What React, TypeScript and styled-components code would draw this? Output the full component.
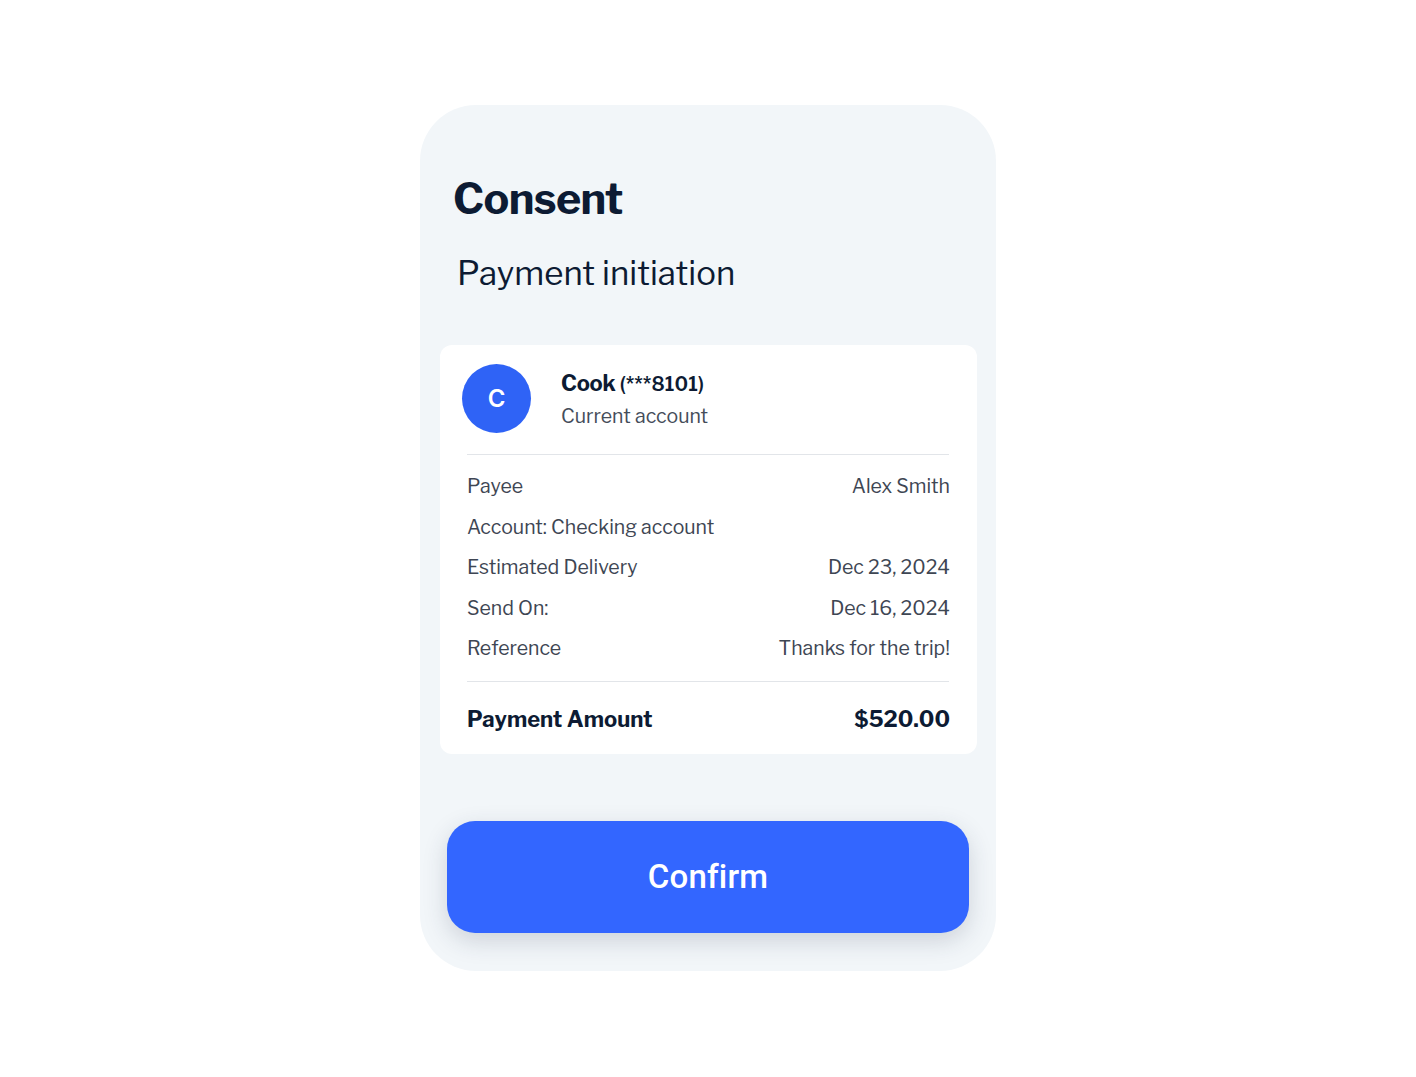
import React from "react";
import styled, { createGlobalStyle } from "styled-components";

const Global = createGlobalStyle`
  html, body { margin: 0; padding: 0; background: #ffffff; }
  body { font-family: "Libre Franklin", Inter, "Noto Sans", sans-serif; }
`;

const Page = styled.div`
  width: 1416px;
  height: 1077px;
  display: flex;
  justify-content: center;
  padding-top: 105px;
  box-sizing: border-box;
`;

const Shell = styled.div`
  width: 576px;
  height: 866px;
  background: #f2f6f9;
  border-radius: 56px;
  box-sizing: border-box;
  padding: 72px 19px 0 20px;
  display: flex;
  flex-direction: column;
`;

const Title = styled.h1`
  margin: 0 0 0 13px;
  font-size: 43px;
  line-height: 44px;
  font-weight: 700;
  color: #0d1b33;
  letter-spacing: -0.6px;
`;

const Subtitle = styled.h2`
  margin: 32px 0 0 17px;
  font-size: 33px;
  line-height: 40px;
  font-weight: 400;
  color: #0d1b33;
  letter-spacing: 0px;
`;

const Card = styled.div`
  margin-top: 52px;
  background: #ffffff;
  border-radius: 12px;
  padding: 19px 28px 22px 22px;
  display: flex;
  flex-direction: column;
`;

const AccountRow = styled.div`
  display: flex;
  align-items: center;
  gap: 30px;
  padding-bottom: 21px;
`;

const Divider = styled.div<{ $inset?: number }>`
  height: 1px;
  background: #e2e5e9;
  margin-left: ${(p) => p.$inset ?? 0}px;
`;

const Avatar = styled.div`
  width: 69px;
  height: 69px;
  border-radius: 50%;
  background: #2f63f6;
  color: #ffffff;
  display: flex;
  align-items: center;
  justify-content: center;
  font-size: 24px;
  font-weight: 600;
  font-family: Inter, sans-serif;
  flex-shrink: 0;
`;

const AccountText = styled.div`
  display: flex;
  flex-direction: column;
  gap: 6px;
`;

const AccountName = styled.div`
  font-size: 22px;
  font-weight: 700;
  color: #0d1b33;
  letter-spacing: -0.3px;
  line-height: 28px;
`;

const AccountMask = styled.span`
  font-size: 19.5px;
  font-weight: 600;
  letter-spacing: 0.1px;
`;

const AccountType = styled.div`
  font-size: 19.5px;
  color: #454d5a;
  line-height: 24px;
  letter-spacing: 0px;
`;

const Details = styled.div`
  display: flex;
  flex-direction: column;
  margin-left: 5px;
`;

const DetailList = styled.div`
  display: flex;
  flex-direction: column;
  padding: 11px 0 12px;
`;

const DetailRow = styled.div`
  display: flex;
  justify-content: space-between;
  align-items: center;
  height: 40.5px;
  font-size: 19.5px;
  color: #3e4653;
  letter-spacing: 0px;
  margin-right: -1px;
`;

const TotalRow = styled.div`
  display: flex;
  justify-content: space-between;
  align-items: center;
  padding-top: 24px;
  font-size: 22px;
  font-weight: 700;
  color: #0d1b33;
  letter-spacing: 0px;
  margin-right: -1px;
`;

const ButtonArea = styled.div`
  margin-top: 67px;
  padding: 0 8px 0 7px;
`;

const ConfirmButton = styled.button`
  width: 100%;
  height: 112px;
  border: none;
  border-radius: 28px;
  background: #3366ff;
  color: #ffffff;
  font-family: Roboto, Inter, sans-serif;
  font-size: 33px;
  font-weight: 500;
  letter-spacing: 0.2px;
  box-shadow: 0 8px 24px rgba(40, 50, 80, 0.18);
  cursor: pointer;
`;

const rows: [string, string][] = [
  ["Payee", "Alex Smith"],
  ["Account: Checking account", ""],
  ["Estimated Delivery", "Dec 23, 2024"],
  ["Send On:", "Dec 16, 2024"],
  ["Reference", "Thanks for the trip!"],
];

export default function App() {
  return (
    <>
      <Global />
      <Page>
        <Shell>
          <Title>Consent</Title>
          <Subtitle>Payment initiation</Subtitle>
          <Card>
            <AccountRow>
              <Avatar>C</Avatar>
              <AccountText>
                <AccountName>
                  Cook <AccountMask>(***8101)</AccountMask>
                </AccountName>
                <AccountType>Current account</AccountType>
              </AccountText>
            </AccountRow>
            <Divider $inset={5} />
            <Details>
              <DetailList>
                {rows.map(([k, v]) => (
                  <DetailRow key={k}>
                    <span>{k}</span>
                    <span>{v}</span>
                  </DetailRow>
                ))}
              </DetailList>
              <Divider />
              <TotalRow>
                <span>Payment Amount</span>
                <span>$520.00</span>
              </TotalRow>
            </Details>
          </Card>
          <ButtonArea>
            <ConfirmButton>Confirm</ConfirmButton>
          </ButtonArea>
        </Shell>
      </Page>
    </>
  );
}
